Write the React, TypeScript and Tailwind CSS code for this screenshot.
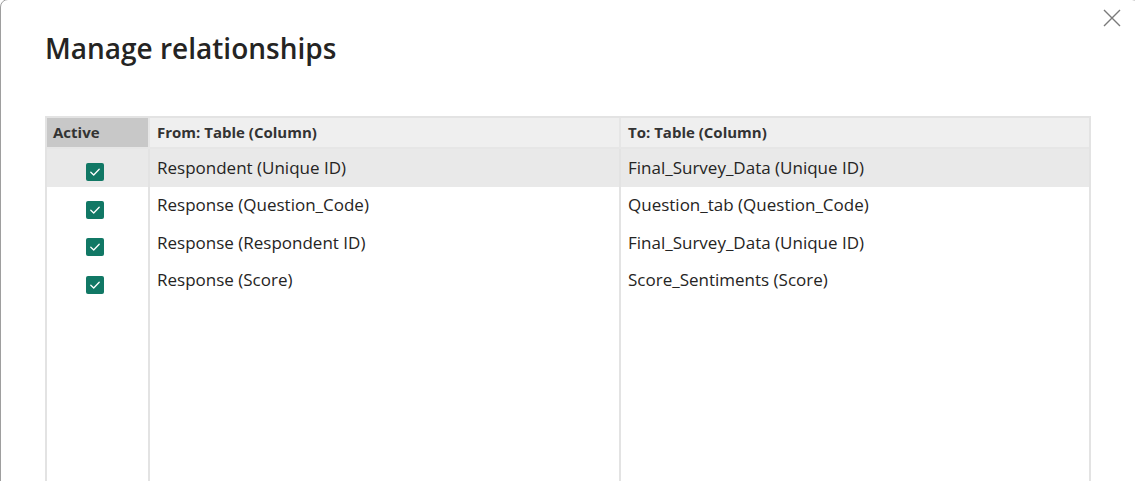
import React from "react";

const rows = [
  { from: "Respondent (Unique ID)", to: "Final_Survey_Data (Unique ID)", selected: true },
  { from: "Response (Question_Code)", to: "Question_tab (Question_Code)", selected: false },
  { from: "Response (Respondent ID)", to: "Final_Survey_Data (Unique ID)", selected: false },
  { from: "Response (Score)", to: "Score_Sentiments (Score)", selected: false },
];

function CheckBox() {
  return (
    <span className="flex h-[18px] w-[18px] items-center justify-center rounded-[2px] bg-[#117865]">
      <svg width="12" height="12" viewBox="0 0 12 12" fill="none">
        <path d="M1.8 6.2 L4.7 9 L10.2 3.2" stroke="white" strokeWidth="1.3" strokeLinecap="round" strokeLinejoin="round" />
      </svg>
    </span>
  );
}

export default function App() {
  return (
    <div className="h-[481px] w-[1135px] overflow-hidden bg-white" style={{ fontFamily: '"Open Sans", "Noto Sans", sans-serif' }}>
      {/* dialog */}
      <div className="relative -mt-px h-[520px] w-[1140px] rounded-t-[8px] border border-[#9e9e9e] bg-white">
        {/* close */}
        <button className="absolute right-[18px] top-[9px] text-[#7a7a7a]" aria-label="Close">
          <svg width="18" height="18" viewBox="0 0 18 18" fill="none">
            <path d="M1 1 L17 17 M17 1 L1 17" stroke="currentColor" strokeWidth="1.4" />
          </svg>
        </button>

        {/* title */}
        <h1 className="ml-[44px] pt-[28px] text-[28px] font-semibold leading-[40px] text-[#252423]">
          Manage relationships
        </h1>

        {/* table */}
        <div className="ml-[44px] mt-[48px] flex h-[420px] w-[1046px] flex-col border-2 border-[#e3e3e3] text-[#252423]">
          <div className="grid h-[31px] grid-cols-[103px_471px_1fr] border-b-2 border-[#e6e6e6] text-[15px] font-bold text-[#333]">
            <div className="flex items-center border-r-2 border-[#e6e6e6] bg-[#c8c8c8] pl-[6px]">Active</div>
            <div className="flex items-center border-r-2 border-[#e6e6e6] bg-[#efefef] pl-[7px]">From: Table (Column)</div>
            <div className="flex items-center bg-[#efefef] pl-[7px]">To: Table (Column)</div>
          </div>

          {rows.map((r, i) => (
            <div
              key={i}
              className={`grid h-[37.5px] grid-cols-[103px_471px_1fr] text-[17px] ${r.selected ? "bg-[#e9e9e9]" : "bg-white"}`}
            >
              <div className="flex items-center justify-center border-r-2 border-[#e3e3e3] pt-[9px] pr-[5px]">
                <CheckBox />
              </div>
              <div className="flex items-center border-r-2 border-[#e3e3e3] pl-[7px] pb-[1px]">{r.from}</div>
              <div className="flex items-center pl-[7px] pb-[1px]">{r.to}</div>
            </div>
          ))}

          <div className="grid flex-1 grid-cols-[103px_471px_1fr]">
            <div className="border-r-2 border-[#e3e3e3]" />
            <div className="border-r-2 border-[#e3e3e3]" />
            <div />
          </div>
        </div>
      </div>
    </div>
  );
}
